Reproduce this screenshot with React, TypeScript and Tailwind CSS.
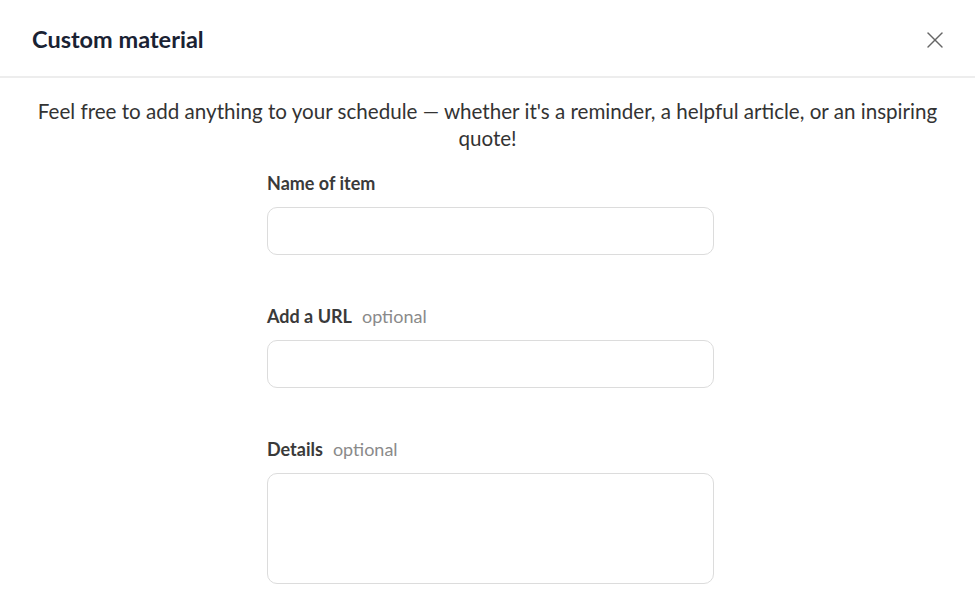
import { X } from "lucide-react";

function Field({ label, optional, tall }: { label: string; optional?: boolean; tall?: boolean }) {
    return (
        <div className="flex flex-col">
            <label className="flex items-baseline h-[22px] leading-[22px] text-[18px] font-bold text-[#3a3a3a]">
                {label}
                {optional && <span className="ml-[10px] font-normal text-[#8a8a8a]">optional</span>}
            </label>
            {tall ? (
                <textarea className="mt-[13px] h-[111px] w-full resize-none rounded-[10px] border border-[#dcdcdc] bg-white" />
            ) : (
                <input className="mt-[13px] h-[48px] w-full rounded-[10px] border border-[#dcdcdc] bg-white" />
            )}
        </div>
    );
}

export default function App() {
    return (
        <div className="w-[975px] h-[602px] overflow-hidden bg-white font-['Lato',sans-serif]">
            <div className="flex items-center justify-between h-[78px] pt-[3px] px-[32px] border-b-2 border-[#ededed]">
                <h1 className="text-[23.5px] font-bold text-[#1a2233]">Custom material</h1>
                <button className="text-[#666] -mr-[6px]">
                    <X size={28} strokeWidth={1.2} />
                </button>
            </div>

            <p className="mt-[20px] px-[30px] text-center text-[20.6px] leading-[27px] text-[#333]">
                Feel free to add anything to your schedule — whether it's a reminder, a helpful article, or an inspiring quote!
            </p>

            <div className="flex justify-center pl-[6px] mt-[20px]">
                <div className="w-[447px] flex flex-col gap-[50px]">
                    <Field label="Name of item" />
                    <Field label="Add a URL" optional />
                    <Field label="Details" optional tall />
                </div>
            </div>
        </div>
    );
}
